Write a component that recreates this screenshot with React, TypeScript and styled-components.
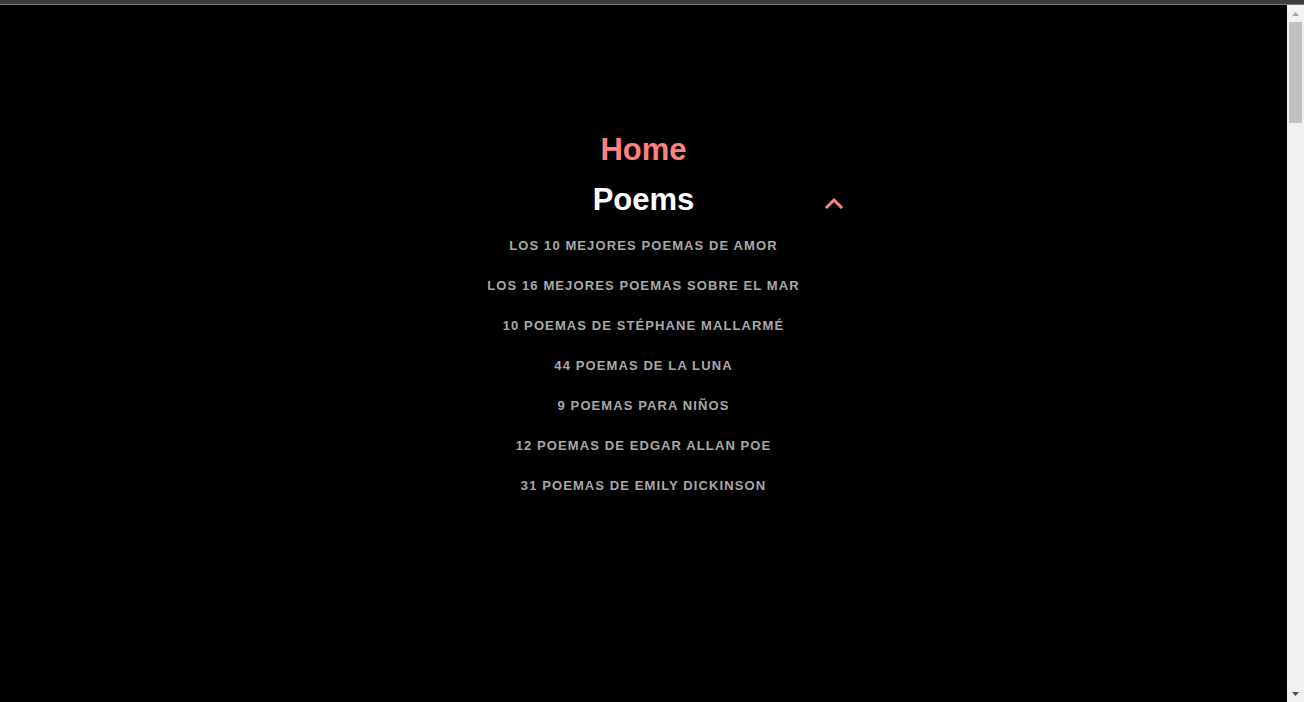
import React, { useState } from "react";
import styled, { createGlobalStyle } from "styled-components";

const GlobalStyle = createGlobalStyle`
  html, body {
    margin: 0;
    padding: 0;
    height: 100%;
    overflow: hidden;
    background: #000;
  }
  #root {
    height: 100%;
  }
`;

const Frame = styled.div`
  display: flex;
  flex-direction: column;
  height: 702px;
  background: #000;
  font-family: "Liberation Sans", Arial, sans-serif;
`;

const TopBar = styled.div`
  flex: 0 0 4px;
  background: #3d3d3d;
  border-bottom: 1px solid #7a7a7a;
`;

const Body = styled.div`
  flex: 1 1 auto;
  display: flex;
  min-height: 0;
`;

const Main = styled.main`
  flex: 1 1 auto;
  overflow: hidden;
  padding-top: 120px;
  display: flex;
  flex-direction: column;
  align-items: center;
`;

const ScrollBar = styled.div`
  flex: 0 0 17px;
  display: flex;
  flex-direction: column;
  background: #f1f1f1;
`;

const ScrollArrow = styled.div`
  flex: 0 0 17px;
  display: flex;
  align-items: center;
  justify-content: center;
`;

const ScrollTrack = styled.div`
  flex: 1 1 auto;
  display: flex;
  flex-direction: column;
  padding: 0 2px;
`;

const ScrollThumb = styled.div`
  flex: 0 0 101px;
  background: #c1c1c1;
`;

const Nav = styled.nav`
  width: 400px;
  display: flex;
  flex-direction: column;
  align-items: stretch;
`;

const TopLink = styled.a<{ $active?: boolean }>`
  display: block;
  text-align: center;
  font-size: 31px;
  font-weight: 700;
  line-height: 50px;
  color: ${(p) => (p.$active ? "#ff8080" : "#ffffff")};
  text-decoration: none;
  cursor: pointer;
`;

const SectionRow = styled.div`
  display: grid;
  grid-template-columns: 1fr auto 1fr;
  align-items: start;
`;

const SectionTitle = styled.span`
  grid-column: 2;
  font-size: 31px;
  font-weight: 700;
  line-height: 50px;
  color: #ffffff;
  text-align: center;
`;

const Toggle = styled.button`
  grid-column: 3;
  justify-self: end;
  margin-top: 22px;
  padding: 0;
  border: none;
  background: transparent;
  width: 20px;
  height: 12px;
  display: flex;
  cursor: pointer;
`;

const SubList = styled.ul`
  list-style: none;
  margin: 1px 0 0;
  padding: 0;
  display: flex;
  flex-direction: column;
  align-items: center;
`;

const SubItem = styled.li`
  font-size: 13px;
  font-weight: 700;
  line-height: 40px;
  letter-spacing: 1.1px;
  text-transform: uppercase;
  color: #a9a9a9;
  white-space: nowrap;
`;

const poems = [
  "Los 10 mejores poemas de amor",
  "Los 16 mejores poemas sobre el mar",
  "10 poemas de Stéphane Mallarmé",
  "44 poemas de la luna",
  "9 poemas para niños",
  "12 poemas de Edgar Allan Poe",
  "31 poemas de Emily Dickinson",
];

export default function App() {
  const [open, setOpen] = useState(true);
  return (
    <>
      <GlobalStyle />
      <Frame>
        <TopBar />
        <Body>
          <Main>
            <Nav>
              <TopLink $active>Home</TopLink>
              <SectionRow>
                <SectionTitle>Poems</SectionTitle>
                <Toggle aria-label="Toggle poems" onClick={() => setOpen(!open)}>
                  <svg width="20" height="12" viewBox="0 0 20 12">
                    <polyline
                      points={open ? "3,10 10,3 17,10" : "3,2 10,9 17,2"}
                      fill="none"
                      stroke="#ff8080"
                      strokeWidth="3"
                      strokeLinecap="square"
                    />
                  </svg>
                </Toggle>
              </SectionRow>
              {open && (
                <SubList>
                  {poems.map((p) => (
                    <SubItem key={p}>{p}</SubItem>
                  ))}
                </SubList>
              )}
            </Nav>
          </Main>
          <ScrollBar aria-hidden="true">
            <ScrollArrow>
              <svg width="7" height="4" viewBox="0 0 7 4">
                <polygon points="0,4 3.5,0 7,4" fill="#a3a3a3" />
              </svg>
            </ScrollArrow>
            <ScrollTrack>
              <ScrollThumb />
            </ScrollTrack>
            <ScrollArrow>
              <svg width="7" height="4" viewBox="0 0 7 4">
                <polygon points="0,0 3.5,4 7,0" fill="#505050" />
              </svg>
            </ScrollArrow>
          </ScrollBar>
        </Body>
      </Frame>
    </>
  );
}
